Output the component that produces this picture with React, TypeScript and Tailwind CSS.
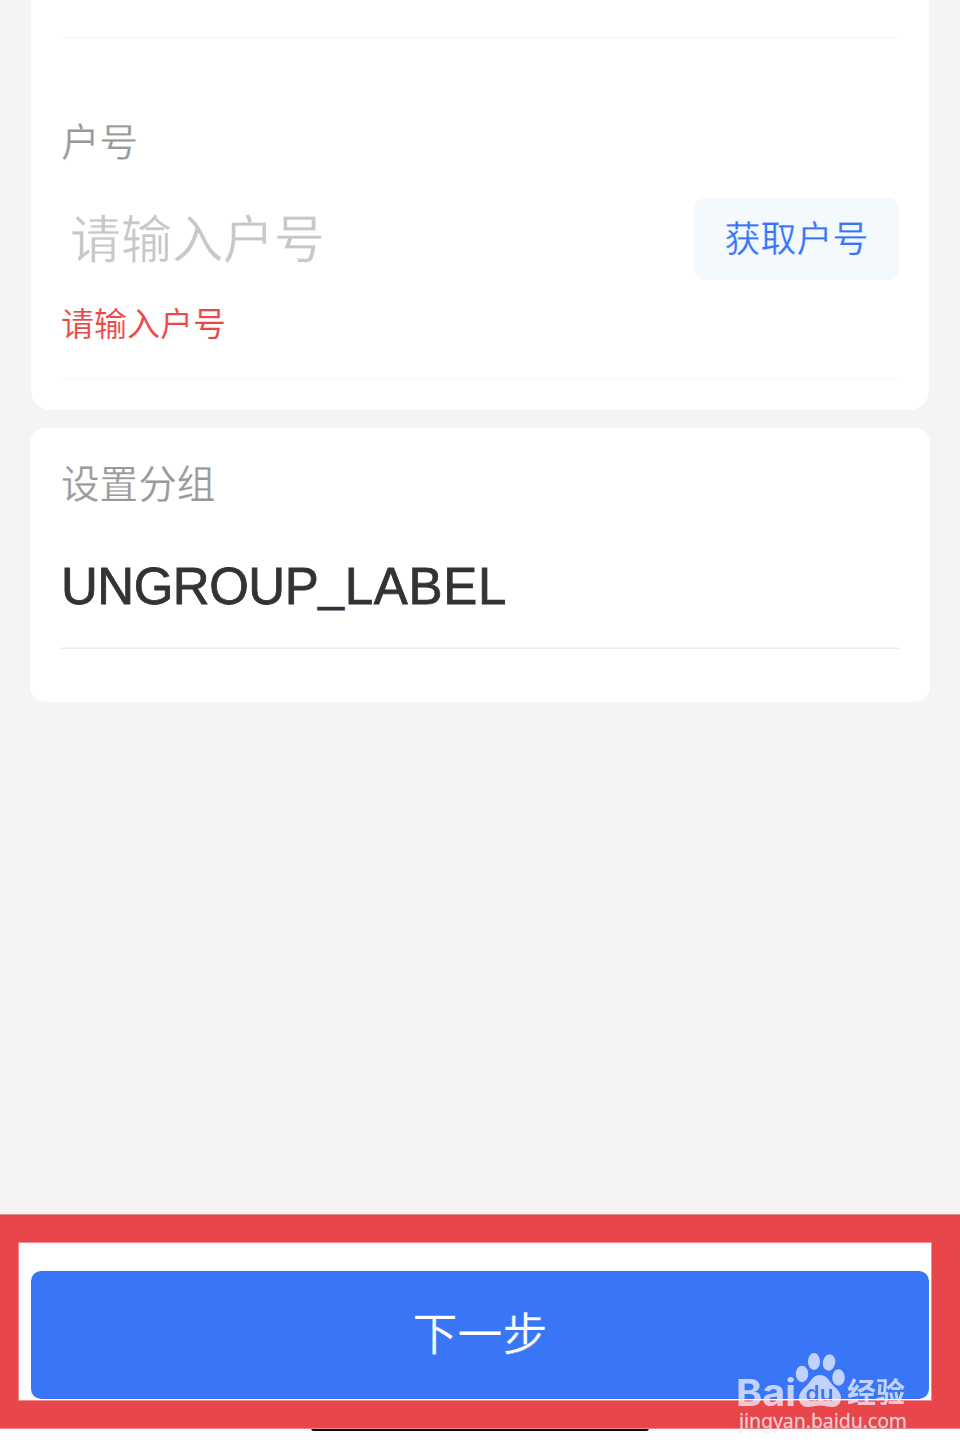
import type { ReactNode } from 'react';

function FieldLabel({ children }: { children: ReactNode }) {
    return (
        <div className="text-[38.6px] leading-[56px] text-[#999999] [-webkit-text-stroke:0.25px_#ffffff]">
            {children}
        </div>
    );
}

function Watermark() {
    return (
        <svg
            className="absolute left-[730px] top-[1345px] opacity-75"
            width="190"
            height="95"
            viewBox="730 1345 190 95"
            fill="#f2f2ff"
        >
            <mask id="du">
                <rect x="790" y="1345" width="60" height="70" fill="#ffffff" />
                <text x="805.5" y="1401" fontFamily="Inter" fontWeight="600" fontSize="22" fill="#000000" textLength="28" lengthAdjust="spacingAndGlyphs">
                    du
                </text>
            </mask>
            <text x="736" y="1406" fontFamily="Inter" fontWeight="700" fontSize="37.5" textLength="60" lengthAdjust="spacingAndGlyphs">
                Bai
            </text>
            <ellipse cx="802" cy="1374" rx="6.3" ry="8.3" />
            <ellipse cx="814" cy="1361.5" rx="6" ry="8.5" />
            <ellipse cx="829" cy="1362.5" rx="6.2" ry="8.3" transform="rotate(12 829 1362.5)" />
            <ellipse cx="838.5" cy="1377.5" rx="6.3" ry="8.3" />
            <path
                mask="url(#du)"
                d="M820 1375c-6 0-8 4-11 8-4 5-10 8-10 15 0 6 4 9 9 9 4 0 8-1.500 12-1.500s8 1.500 12 1.500c5 0 9-3 9-9 0-7-6-10-10-15-3-4-5-8-11-8z"
            />
            <text x="847" y="1402.5" fontFamily="Noto Sans CJK SC" fontWeight="700" fontSize="28.5" textLength="58" lengthAdjust="spacingAndGlyphs">
                经验
            </text>
            <text x="739" y="1428" fontFamily="Noto Sans" fontSize="19.5" stroke="#c8c8c8" strokeWidth="0.5" paintOrder="stroke" textLength="168" lengthAdjust="spacingAndGlyphs">
                jingyan.baidu.com
            </text>
        </svg>
    );
}

export default function App() {
    return (
        <div className="relative flex h-[1455px] w-[960px] flex-col overflow-hidden bg-[#f4f4f4] font-['Liberation_Sans','Noto_Sans_CJK_SC',sans-serif]">
            <section className="mx-[31px] flex h-[410px] flex-col rounded-b-[20px] bg-white px-[30px]">
                <div className="mt-[37px] h-0.5 bg-[#fafafa]" />
                <div className="mt-[76px]">
                    <FieldLabel>户号</FieldLabel>
                </div>
                <div className="mt-[27px] flex h-[82px] items-center justify-between">
                    <input
                        type="text"
                        className="h-[82px] w-[560px] pl-[9px] pt-[3px] text-[51px] outline-none [-webkit-text-stroke:0.3px_#ffffff] placeholder:text-[#c8c8c8] placeholder:opacity-100"
                        placeholder="请输入户号"
                    />
                    <button className="h-[82px] w-[205px] rounded-[10px] bg-[#f4f9fe] pb-1.5 text-[36px] leading-[76px] text-[#3973fa] [-webkit-text-stroke:0.25px_#f4f9fe]">
                        <span className="block pt-1">获取户号</span>
                    </button>
                </div>
                <p className="mt-5 text-[33px] leading-[50px] text-[#ec4649] [-webkit-text-stroke:0.15px_#ffffff]">请输入户号</p>
                <div className="mt-7 h-0.5 bg-[#fafafa]" />
            </section>

            <section className="mx-[30px] mt-[18px] flex h-[274px] flex-col rounded-[15px] bg-white px-[31px] pt-[29px]">
                <FieldLabel>设置分组</FieldLabel>
                <div className="mt-[43px] flex text-[51px] leading-[62px] text-[#333333] [-webkit-text-stroke:0.8px_#333333]">
                    <span className="tracking-[-0.5px]">UNGROUP</span>
                    <span className="w-[26.5px] -translate-y-0.5 text-[46px]">_</span>
                    <span className="tracking-[0.7px]">LABEL</span>
                </div>
                <div className="mt-[29px] h-0.5 border-b border-[#ebebeb] bg-[#f4f4f4]" />
            </section>

            <footer className="relative mt-[513px] h-[213px] border-b-[27px] border-l-[18px] border-r-[28px] border-t-[27px] border-[#e9464b] bg-white pl-[13px] pr-[3px] pt-[29px] shadow-[0_-1px_0_#e58b8d,0_1px_0_#ee8689,inset_0_0_0_1px_#f08a8d]">
                <button className="h-[128px] w-full rounded-[10px] bg-[#3975f7] pt-0.5 text-[45px] leading-[126px] text-white [-webkit-text-stroke:0.25px_#3975f7]">
                    下一步
                </button>
            </footer>

            {/* home indicator */}
            <div className="flex flex-1 justify-center bg-white">
                <div className="h-[3px] w-[338px] rounded-b-[3px] bg-black" />
            </div>

            <Watermark />
        </div>
    );
}
